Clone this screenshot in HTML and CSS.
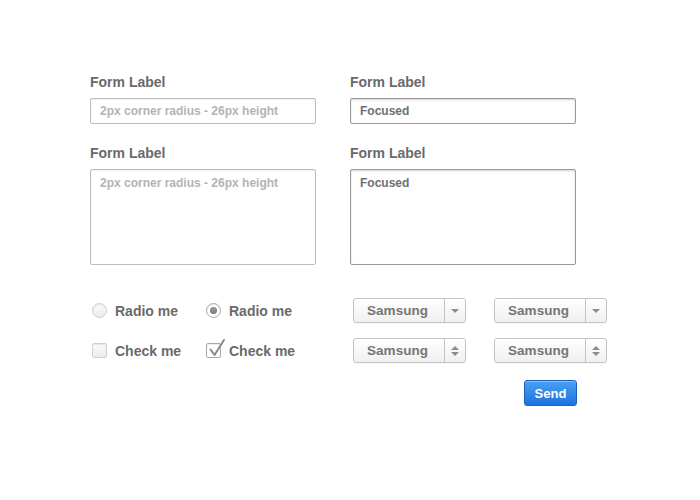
FILE: index.html
```html
<!DOCTYPE html>
<html>
<head>
<meta charset="utf-8">
<link rel="stylesheet" href="styles.css">
</head>
<body>
<div class="page">
  <div class="form-grid">
    <div class="field">
      <div class="label">Form Label</div>
      <input class="input" type="text" placeholder="2px corner radius - 26px height">
    </div>
    <div class="field">
      <div class="label">Form Label</div>
      <input class="input focused" type="text" value="Focused">
    </div>
    <div class="field">
      <div class="label">Form Label</div>
      <textarea class="input area" placeholder="2px corner radius - 26px height"></textarea>
    </div>
    <div class="field">
      <div class="label">Form Label</div>
      <textarea class="input area focused">Focused</textarea>
    </div>
  </div>

  <div class="controls">
    <div class="opt"><span class="radio"></span><span class="opt-text">Radio me</span></div>
    <div class="opt"><span class="radio on"><span class="dot"></span></span><span class="opt-text">Radio me</span></div>
    <div class="select"><span class="sel-text">Samsung</span><span class="sel-btn"><span class="tri-down"></span></span></div>
    <div class="select"><span class="sel-text">Samsung</span><span class="sel-btn"><span class="tri-down"></span></span></div>

    <div class="opt"><span class="check"></span><span class="opt-text">Check me</span></div>
    <div class="opt"><span class="check on">
      <svg class="tick" width="26" height="24" viewBox="0 0 26 24"><path d="M4.5 12.5 L8.5 18 L18 3" fill="none" stroke="#8a8a8a" stroke-width="2" stroke-linecap="round" stroke-linejoin="round"/></svg>
    </span><span class="opt-text">Check me</span></div>
    <div class="select"><span class="sel-text">Samsung</span><span class="sel-btn stack"><span class="tri-up"></span><span class="tri-down"></span></span></div>
    <div class="select"><span class="sel-text">Samsung</span><span class="sel-btn stack"><span class="tri-up"></span><span class="tri-down"></span></span></div>
  </div>

  <div class="actions">
    <button class="send">Send</button>
  </div>
</div>
</body>
</html>
```

FILE: styles.css
```css
html, body {
  margin: 0;
  padding: 0;
  background: #fff;
}
body {
  font-family: "Liberation Sans", Arial, sans-serif;
  color: #666;
}
.page {
  padding: 74px 0 0 90px;
}
.form-grid {
  display: grid;
  grid-template-columns: 226px 226px;
  column-gap: 34px;
  row-gap: 21px;
}
.field {
  display: flex;
  flex-direction: column;
}
.label {
  font-size: 14px;
  font-weight: bold;
  line-height: 16px;
  color: #6a6a6a;
  margin-bottom: 8px;
}
.input {
  box-sizing: border-box;
  width: 226px;
  height: 26px;
  margin: 0;
  padding: 0 9px;
  border: 1px solid #bdbdbd;
  border-radius: 2px;
  background: #fff;
  font-family: "Liberation Sans", Arial, sans-serif;
  font-size: 12px;
  font-weight: bold;
  color: #707070;
  outline: none;
  box-shadow: inset 0 1px 1px rgba(0,0,0,0.06);
}
.input::placeholder {
  color: #b4b4b4;
  opacity: 1;
}
.input.focused {
  border-color: #9a9a9a;
  box-shadow: inset 0 1px 2px rgba(0,0,0,0.18);
}
.area {
  height: 96px;
  resize: none;
  padding: 6px 9px;
  line-height: 14px;
}
.controls {
  margin-top: 33px;
  margin-left: 2px;
  display: grid;
  grid-template-columns: 114px 147px 141px 113px;
  grid-auto-rows: 25px;
  row-gap: 15px;
  align-items: center;
}
.opt {
  display: flex;
  align-items: center;
  gap: 8px;
}
.opt-text {
  font-size: 14px;
  font-weight: bold;
  color: #6a6a6a;
}
.radio {
  box-sizing: border-box;
  width: 15px;
  height: 15px;
  border-radius: 50%;
  border: 1px solid #cfcfcf;
  background: linear-gradient(#fafafa, #ececec);
  box-shadow: inset 0 1px 1px rgba(0,0,0,0.08);
  display: flex;
  align-items: center;
  justify-content: center;
}
.radio.on {
  border-color: #a8a8a8;
  background: #fff;
}
.dot {
  width: 7px;
  height: 7px;
  border-radius: 50%;
  background: radial-gradient(circle at 50% 35%, #9a9a9a, #6f6f6f);
}
.check {
  position: relative;
  box-sizing: border-box;
  width: 15px;
  height: 15px;
  border-radius: 2px;
  border: 1px solid #cfcfcf;
  background: linear-gradient(#fafafa, #ececec);
  box-shadow: inset 0 1px 1px rgba(0,0,0,0.08);
}
.check.on {
  border-color: #a8a8a8;
  background: #fff;
}
.tick {
  position: absolute;
  left: -1px;
  top: -7px;
}
.select {
  box-sizing: border-box;
  width: 113px;
  height: 25px;
  border: 1px solid #c3c3c3;
  border-radius: 3px;
  background: linear-gradient(#ffffff, #f0f0f0);
  display: flex;
  box-shadow: 0 1px 0 rgba(0,0,0,0.03);
}
.sel-text {
  flex: 1;
  display: flex;
  align-items: center;
  justify-content: center;
  font-size: 13.5px;
  font-weight: bold;
  color: #757575;
  padding-right: 3px;
}
.sel-btn {
  width: 20px;
  border-left: 1px solid #c3c3c3;
  display: flex;
  align-items: center;
  justify-content: center;
}
.sel-btn.stack {
  flex-direction: column;
  gap: 2px;
}
.tri-down {
  width: 0;
  height: 0;
  border-left: 4px solid transparent;
  border-right: 4px solid transparent;
  border-top: 4px solid #8c8c8c;
}
.tri-up {
  width: 0;
  height: 0;
  border-left: 4px solid transparent;
  border-right: 4px solid transparent;
  border-bottom: 4px solid #8c8c8c;
}
.actions {
  margin-top: 17px;
  padding-left: 434px;
}
.send {
  box-sizing: border-box;
  width: 53px;
  height: 26px;
  border: 1px solid #1d62b8;
  border-radius: 3px;
  background: linear-gradient(#4aa0f2, #1c73e0);
  color: #fff;
  font-family: "Liberation Sans", Arial, sans-serif;
  font-size: 13px;
  font-weight: bold;
  padding: 0;
  box-shadow: inset 0 1px 0 rgba(255,255,255,0.3), 0 1px 1px rgba(0,0,0,0.1);
}
```
